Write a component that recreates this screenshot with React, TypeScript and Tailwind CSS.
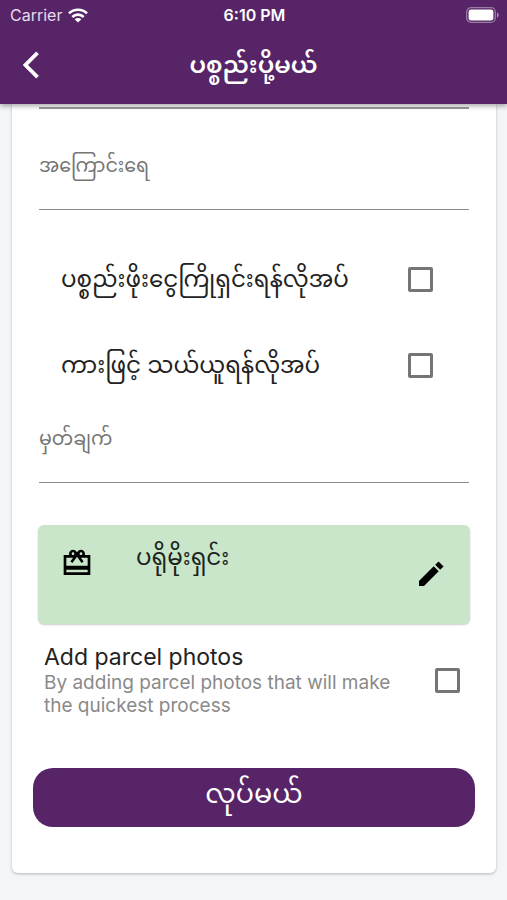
import { useState } from "react";

type IconProps = { className?: string };

function WifiIcon({ className }: IconProps) {
  return (
    <svg viewBox="0 0 20 15" className={className} aria-hidden="true">
      <g fill="none" stroke="currentColor" strokeWidth="2.6">
        <path d="M1 5.4a12.8 12.8 0 0 1 18 0" />
        <path d="M4.3 9a8.1 8.1 0 0 1 11.4 0" />
      </g>
      <path d="M10 14.6 6.7 11.3a4.7 4.7 0 0 1 6.6 0z" fill="currentColor" />
    </svg>
  );
}

function BatteryIcon({ className }: IconProps) {
  return (
    <svg viewBox="0 0 33 16" className={className} aria-hidden="true">
      <rect
        x="0.7"
        y="0.7"
        width="28.6"
        height="14.6"
        rx="4.4"
        fill="none"
        stroke="currentColor"
        strokeOpacity="0.4"
        strokeWidth="1.3"
      />
      <rect x="2.6" y="2.6" width="24.8" height="10.8" rx="2.6" fill="currentColor" />
      <path d="M31 5.4v5.2c1-.5 1.7-1.4 1.7-2.6S32 5.900 31 5.400z" fill="currentColor" fillOpacity="0.5" />
    </svg>
  );
}

function BackIcon({ className }: IconProps) {
  return (
    <svg
      viewBox="0 0 24 24"
      className={className}
      fill="currentColor"
      stroke="currentColor"
      strokeWidth="0.4"
      aria-hidden="true"
    >
      <path d="M11.67 3.87 9.9 2.1 0 12l9.9 9.9 1.77-1.77L3.54 12z" />
    </svg>
  );
}

function GiftIcon({ className }: IconProps) {
  return (
    <svg viewBox="0 0 24 24" className={className} fill="currentColor" aria-hidden="true">
      <path d="M22 6h-4.18c.11-.31.18-.65.18-1 0-1.66-1.34-3-3-3-1.05 0-1.96.54-2.5 1.35l-.5.67-.5-.68C10.96 2.54 10.05 2 9 2 7.34 2 6 3.34 6 5c0 .35.07.69.18 1H2v15h20V6zm-7-2c.55 0 1 .45 1 1s-.45 1-1 1-1-.45-1-1 .45-1 1-1zM9 4c.55 0 1 .45 1 1s-.45 1-1 1-1-.45-1-1 .45-1 1-1zm11 15H4v-2h16v2zm0-5H4V8h5.080L7 10.830 8.620 12 12 7.400l3.380 4.600L17 10.830 14.920 8H20v6z" />
    </svg>
  );
}

function EditIcon({ className }: IconProps) {
  return (
    <svg viewBox="0 0 24 24" className={className} fill="currentColor" aria-hidden="true">
      <path d="M3 17.25V21h3.75L17.81 9.94l-3.75-3.75L3 17.25zM21.41 6.34l-3.75-3.75-2.53 2.54 3.75 3.75 2.53-2.54z" />
    </svg>
  );
}

function Field({ id, label }: { id: string; label: string }) {
  return (
    <div className="mx-1.5 flex flex-col border-b border-[#8c8c8c]">
      <label htmlFor={id} className="text-[19px] leading-[30px] text-[#757575]">
        {label}
      </label>
      <input id={id} type="text" className="h-7 w-full bg-transparent text-[19px] outline-none" />
    </div>
  );
}

const checkboxClass =
  "size-[25px] shrink-0 appearance-none rounded-[2px] border-3 border-[#757575] checked:bg-[#572567]";

function CheckRow({ id, label }: { id: string; label: string }) {
  const [checked, setChecked] = useState(false);
  return (
    <div className="flex h-[86px] items-center justify-between pr-[42px] pl-7">
      <label htmlFor={id} className="text-[23px] leading-9 text-[#222222]">
        {label}
      </label>
      <input
        id={id}
        type="checkbox"
        checked={checked}
        onChange={(e) => setChecked(e.target.checked)}
        className={checkboxClass}
      />
    </div>
  );
}

export default function App() {
  const [photos, setPhotos] = useState(false);

  return (
    <div className="min-h-screen bg-[#f3f5f7] font-['Inter','Noto_Sans_Myanmar','Noto_Sans',sans-serif]">
      <header className="sticky top-0 z-10 bg-[#572567] text-white shadow-[0_2px_5px_rgba(0,0,0,0.35)]">
        <div className="grid h-[30px] grid-cols-3 items-center pr-2 pl-2.5 text-[16px] leading-5">
          <span className="flex items-center gap-1.5 text-[#e6dcea]">
            Carrier
            <WifiIcon className="h-[15px] w-5 text-white" />
          </span>
          <span className="text-center font-semibold">6:10 PM</span>
          <BatteryIcon className="h-4 w-[33px] justify-self-end" />
        </div>
        <div className="grid h-[74px] grid-cols-[1fr_auto_1fr] items-center px-[23px] pb-1">
          <button type="button" aria-label="Back" className="size-8">
            <BackIcon className="size-8" />
          </button>
          <h1 className="text-[24px] leading-9 font-semibold">ပစ္စည်းပို့မယ်</h1>
        </div>
      </header>

      <main className="mr-[11px] ml-3 rounded-b-md bg-white px-[21px] pt-[3px] pb-[46px] shadow-[0_1px_3px_rgba(0,0,0,0.25)]">
        <div className="mx-1.5 border-b-2 border-[#9a9d9d]" />

        <div className="pt-[42px] pb-[26px]">
          <Field id="reason" label="အကြောင်းရေ" />
        </div>

        <CheckRow id="prepay" label="ပစ္စည်းဖိုးငွေကြိုရှင်းရန်လိုအပ်" />
        <CheckRow id="car" label="ကားဖြင့် သယ်ယူရန်လိုအပ်" />

        <div className="pt-4 pb-[42px]">
          <Field id="note" label="မှတ်ချက်" />
        </div>

        <section className="mx-[5px] flex h-[99px] items-start rounded-md bg-[#c9e6ca] px-[23px] text-black shadow-[0_1px_2px_rgba(0,0,0,0.2)]">
          <GiftIcon className="mt-[22px] size-8" />
          <h2 className="ml-[43px] flex-1 pt-3.5 text-[23px] leading-9 text-[#1b241b]">ပရိုမိုးရှင်း</h2>
          <button type="button" aria-label="Edit promotion" className="mt-[33px]">
            <EditIcon className="size-8" />
          </button>
        </section>

        <div className="flex h-[144px] items-start justify-between pt-5 pr-[15px] pl-[11px]">
          <label htmlFor="photos" className="flex max-w-[360px] flex-col">
            <span className="text-[23px] leading-[27px] text-[#222222]">Add parcel photos</span>
            <span className="text-[19px] leading-[23px] text-[#8a8a8a]">
              By adding parcel photos that will make the quickest process
            </span>
          </label>
          <input
            id="photos"
            type="checkbox"
            checked={photos}
            onChange={(e) => setPhotos(e.target.checked)}
            className={`mt-6 ${checkboxClass}`}
          />
        </div>

        <button
          type="button"
          className="flex h-[59px] w-full justify-center rounded-[20px] bg-[#572567] pt-2 text-[27px] leading-9 text-white"
        >
          လုပ်မယ်
        </button>
      </main>
    </div>
  );
}
